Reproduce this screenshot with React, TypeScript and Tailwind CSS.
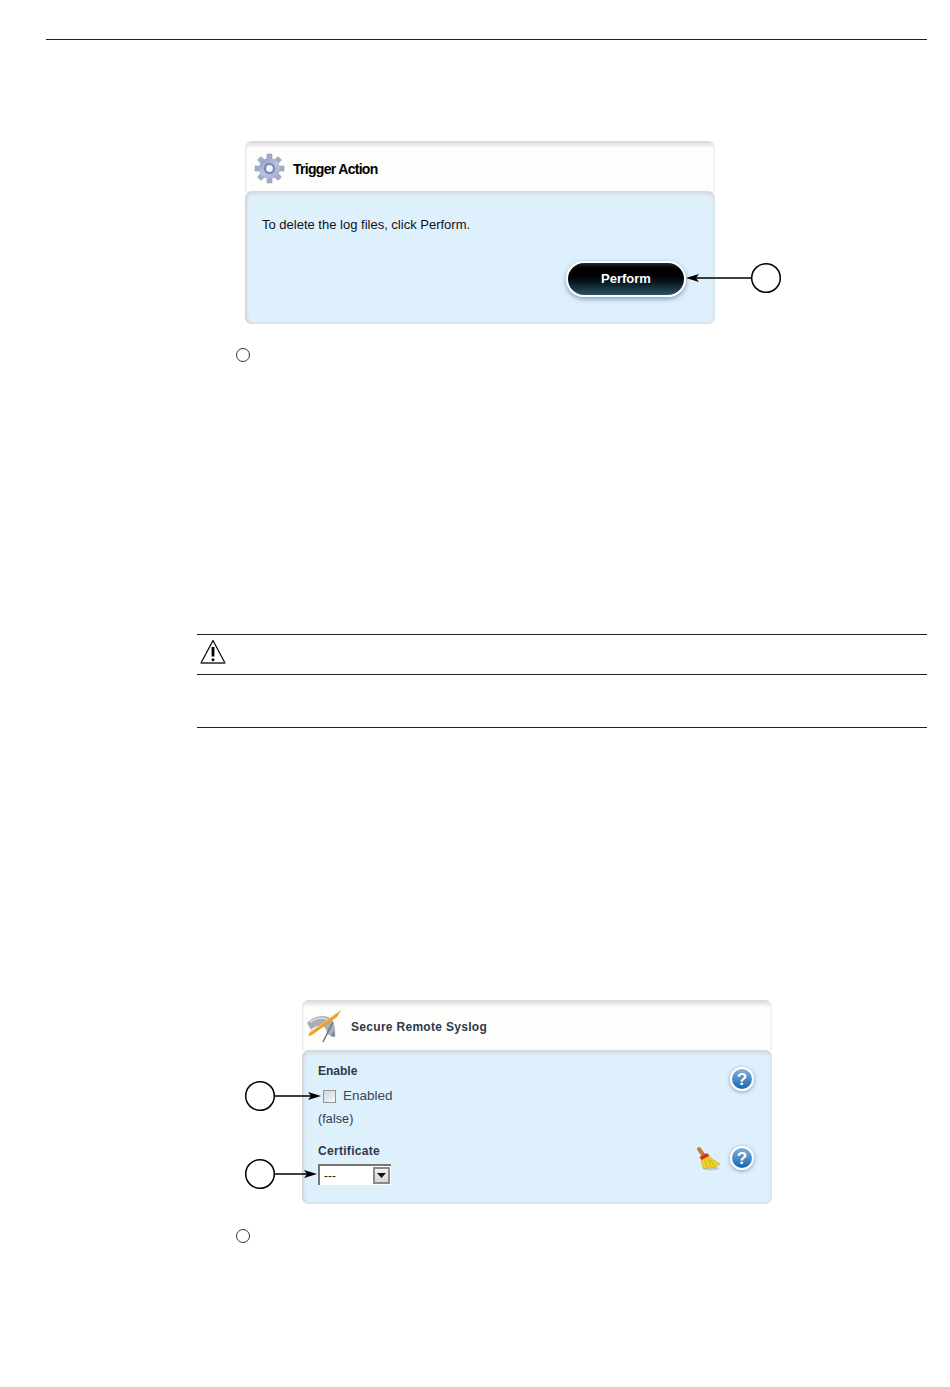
import React from 'react';

const TEETH = [0, 45, 90, 135, 180, 225, 270, 315];

const GearIcon = () => (
  <svg className="mt-[3px]" width="32" height="32" viewBox="0 0 32 32">
    <defs>
      <linearGradient id="gearFill" gradientUnits="userSpaceOnUse" x1="6" y1="2" x2="24" y2="30">
        <stop offset="0" stopColor="#7f95c2" />
        <stop offset="0.5" stopColor="#bcc2dc" />
        <stop offset="1" stopColor="#a3a6c6" />
      </linearGradient>
    </defs>
    {TEETH.map((a) => (
      <rect key={a} x="13" y="1" width="5" height="7" fill="#a2acca" stroke="#8f96b4" strokeWidth="0.5" transform={`rotate(${a} 15.5 15.5)`} />
    ))}
    <circle cx="15.5" cy="15.5" r="10.5" fill="url(#gearFill)" />
    <circle cx="15.5" cy="15.5" r="5.6" fill="#7886ad" />
    <circle cx="15.5" cy="15.5" r="3.4" fill="#f5f6fb" />
  </svg>
);

const ToolsIcon = () => (
  <svg width="36" height="34" viewBox="0 0 36 34">
    <path d="M1 14 C7 7 18 5 24 9 C28 12 30 20 29 28 L21 25 C21 21 19 18 16 17 C11 16 7 19 5 21 Z" fill="#a7b0b7" />
    <path d="M4 13 C10 9 17 8 22 11" fill="none" stroke="#dbe0e3" strokeWidth="1.6" />
    <path d="M24 27 L29 28 L28 22 Z" fill="#7f8a93" />
    <path d="M35 1 L31 8 L6 26 L2 27 L4 23 Z" fill="#f09c2a" />
    <path d="M34 2 L4 24" stroke="#f7c778" strokeWidth="0.8" />
    <path d="M27 13 L17 33" stroke="#6f767c" strokeWidth="1.6" />
  </svg>
);

const BroomIcon = () => (
  <svg width="24" height="26" viewBox="0 0 24 26">
    <ellipse cx="15" cy="22.5" rx="8" ry="1.8" fill="#b9c7d2" />
    <path d="M3 3 L8 10" stroke="#bd8041" strokeWidth="4" strokeLinecap="round" />
    <path d="M5 14 L12 8 L16 13 L24 18 L20 21 L7 22.5 Z" fill="#efd22c" stroke="#b79b18" strokeWidth="0.5" />
    <path d="M9 14 L11 21 M12 13 L15 20 M14 14 L19 20" stroke="#c3a614" strokeWidth="0.8" />
    <path d="M3.5 11 L11 7 L13 10 L5.5 14 Z" fill="#de2b1f" />
  </svg>
);

const HelpIcon = () => (
  <div className="flex h-[24px] w-[24px] items-center justify-center rounded-full border-2 border-white bg-gradient-to-b from-[#7fb2dd] to-[#0f66ad] shadow-[0_1px_4px_rgba(90,120,150,0.7)]">
    <span className="text-[17px] leading-none font-bold text-white">?</span>
  </div>
);

const WarningIcon = () => (
  <svg width="28" height="28" viewBox="0 0 28 28">
    <path d="M14 2.5 L26 25 H2 Z" fill="none" stroke="#000" strokeWidth="1.2" strokeLinejoin="round" />
    <path d="M2 25 H26" stroke="#555" strokeWidth="1.6" />
    <path d="M14 9 V18.5" stroke="#000" strokeWidth="2.8" />
    <circle cx="14" cy="21.7" r="1.5" fill="#000" />
  </svg>
);

// callouts: ring + line + arrowhead, they sit on top of the panel edge
const CalloutRight = ({ className, tip }: { className: string; tip: number }) => (
  <svg className={className} width="78" height="32" viewBox="0 0 78 32">
    <circle cx="16" cy="16" r="14.3" fill="#fff" stroke="#000" strokeWidth="1.5" />
    <path d={`M30 16 H${tip - 10}`} stroke="#000" strokeWidth="1.5" />
    <path d={`M${tip} 16 L${tip - 13} 12 L${tip - 10} 16 L${tip - 13} 20 Z`} fill="#000" />
  </svg>
);

const CalloutLeft = ({ className }: { className: string }) => (
  <svg className={className} width="98" height="32" viewBox="0 0 98 32">
    <path d="M2 16 L15 12 L12 16 L15 20 Z" fill="#000" />
    <path d="M12 16 H68" stroke="#000" strokeWidth="1.5" />
    <circle cx="82" cy="16" r="14.3" fill="#fff" stroke="#000" strokeWidth="1.5" />
  </svg>
);

const Panel = ({ icon, title, titleClass, className, children }: { icon: React.ReactNode; title: string; titleClass: string; className: string; children: React.ReactNode }) => (
  <div className={`relative w-[470px] ${className}`}>
    <div className="flex h-[50px] items-center rounded-t-[7px] bg-gradient-to-b from-[#d4d6d6] via-[#fdfdfb] via-[14%] to-[#fdfdfb] pt-[2px] pl-[9px] shadow-[inset_2px_0_2px_-1px_#dfe1e1,inset_-2px_0_2px_-1px_#e6e8e8]">
      {icon}
      <span className={titleClass}>{title}</span>
    </div>
    <div className="rounded-[7px] bg-[#dff0fd] shadow-[inset_0_5px_4px_-2px_#d3d8da,inset_4px_0_3px_-2px_#ccd4d9,inset_-4px_0_3px_-2px_#dde7ed,inset_0_-3px_2px_-1px_#dce3e7]">
      {children}
    </div>
  </div>
);

const Radio = () => <div className="ml-[236px] h-[14px] w-[14px] rounded-full border border-[#333] bg-white" />;

export default function App() {
  return (
    <div className="h-[1387px] w-[950px] overflow-hidden bg-white font-['Liberation_Sans',sans-serif]">
      <div className="ml-[46px] w-[881px] pt-[39px]">
        <div className="h-px bg-[#222]" />
      </div>

      <Panel
        className="mt-[101px] ml-[245px]"
        icon={<GearIcon />}
        title="Trigger Action"
        titleClass="mt-[4px] ml-[7px] text-[14px] font-bold tracking-[-0.7px] text-black"
      >
        <div className="h-[133px] pt-[26px] pl-[17px] text-[13px] leading-[16px] text-[#101018]">
          To delete the log files, click Perform.
        </div>
        <div className="absolute top-[120px] left-[321px] flex h-[36px] w-[120px] items-center justify-center rounded-full border-2 border-white bg-gradient-to-b from-[#2a2a2a] via-[#000] via-[25%] to-[#2c5568] text-[13px] font-bold text-white shadow-[0_2px_5px_rgba(70,100,125,0.6)]">
          Perform
        </div>
        <CalloutLeft className="absolute top-[121px] left-[439px]" />
      </Panel>

      <div className="mt-[24px]">
        <Radio />
      </div>

      <div className="mt-[272px] ml-[197px] w-[730px]">
        <div className="h-[41px] border-t border-b border-[#222] pt-[3px] pl-[2px]">
          <WarningIcon />
        </div>
        <div className="h-[53px] border-b border-[#222]" />
      </div>

      <Panel
        className="mt-[272px] ml-[302px]"
        icon={
          <div className="-ml-[5px]">
            <ToolsIcon />
          </div>
        }
        title="Secure Remote Syslog"
        titleClass="mt-[2px] ml-[9px] text-[12px] font-bold tracking-[0.3px] text-[#2c3a4a]"
      >
        <div className="relative h-[154px] pt-[13px] pl-[16px] text-[12px] text-[#2c3a4a]">
          <div className="leading-[16px] font-bold">Enable</div>
          <div className="mt-[9px] flex items-center">
            <div className="ml-[5px] h-[13px] w-[13px] border border-[#8e9499] bg-gradient-to-br from-[#d4d6da] to-[#f6f7f8]" />
            <span className="ml-[7px] text-[13.5px] leading-[16px] text-[#3a4655]">Enabled</span>
          </div>
          <div className="mt-[7px] text-[12.5px] leading-[16px] tracking-[0.1px]">(false)</div>
          <div className="mt-[16px] leading-[16px] font-bold tracking-[0.3px]">Certificate</div>
          <div className="mt-[5px] flex h-[21px] w-[73px] items-center justify-between border-t-2 border-l-2 border-t-[#767676] border-l-[#767676] bg-white pr-[1px] pl-[4px]">
            <span className="text-[12px] leading-none text-[#222]">---</span>
            <div className="flex h-[17px] w-[17px] items-center justify-center border-2 border-[#8a8a8a] bg-gradient-to-b from-[#f2f2f2] to-[#d6d6d6]">
              <svg width="9" height="5" viewBox="0 0 9 5">
                <path d="M0 0 H9 L4.5 5 Z" fill="#111" />
              </svg>
            </div>
          </div>
          <div className="absolute top-[17px] right-[18px]">
            <HelpIcon />
          </div>
          <div className="absolute top-[96px] right-[18px]">
            <HelpIcon />
          </div>
          <div className="absolute top-[96px] right-[52px]">
            <BroomIcon />
          </div>
        </div>
        <CalloutRight className="absolute top-[80px] left-[-58px]" tip={77} />
        <CalloutRight className="absolute top-[158px] left-[-58px]" tip={73} />
      </Panel>

      <div className="mt-[25px]">
        <Radio />
      </div>
    </div>
  );
}
